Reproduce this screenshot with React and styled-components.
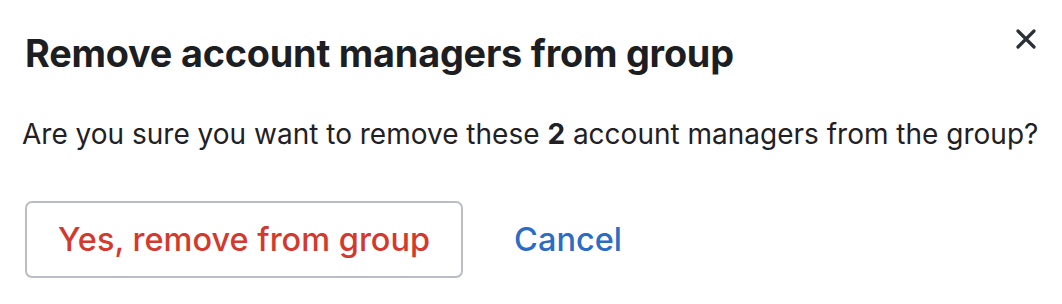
import React from "react";
import styled, { createGlobalStyle } from "styled-components";

const GlobalStyle = createGlobalStyle`
  html, body {
    margin: 0;
    padding: 0;
    background: #ffffff;
  }
  body {
    font-family: Inter, "Liberation Sans", sans-serif;
    color: #1f2124;
  }
`;

const Dialog = styled.div`
  width: 1062px;
  height: 304px;
  box-sizing: border-box;
  padding: 29px 26px 0 24px;
  display: flex;
  flex-direction: column;
`;

const Header = styled.div`
  display: flex;
  justify-content: space-between;
  align-items: flex-start;
`;

const Title = styled.h2`
  margin: 0 0 0 1px;
  font-size: 37.8px;
  line-height: 48px;
  font-weight: 700;
  letter-spacing: -0.2px;
  color: #1c1e21;
`;

const CloseButton = styled.button`
  border: none;
  background: none;
  padding: 0;
  margin: 0;
  width: 20px;
  height: 20px;
  display: flex;
  align-items: center;
  justify-content: center;
  cursor: pointer;
`;

const Message = styled.p`
  margin: 39px 0 0 -2px;
  font-size: 28px;
  line-height: 36px;
  font-weight: 400;
  color: #1f2124;
  white-space: nowrap;
  strong {
    font-weight: 700;
  }
`;

const Actions = styled.div`
  display: flex;
  align-items: center;
  gap: 51px;
  margin-top: 49px;
  margin-left: 1px;
`;

const ActionButton = styled.button`
  font-family: inherit;
  font-size: 32.5px;
  font-weight: 500;
  cursor: pointer;
  background: #fff;
  color: ${(p) => (p.$danger ? "#d4392e" : "#2b6cc4")};
  border: ${(p) => (p.$outlined ? "2px solid #babec4" : "none")};
  border-radius: 7px;
  height: ${(p) => (p.$outlined ? "77px" : "auto")};
  padding: ${(p) => (p.$outlined ? "0 31px" : "0")};
`;

const CloseIcon = () => (
  <svg width="20" height="20" viewBox="0 0 20 20">
    <path
      d="M2 2 L18 18 M18 2 L2 18"
      stroke="#2b3036"
      strokeWidth="3.2"
      strokeLinecap="round"
    />
  </svg>
);

export default function App() {
  return (
    <>
      <GlobalStyle />
      <Dialog>
        <Header>
          <Title>Remove account managers from group</Title>
          <CloseButton aria-label="Close">
            <CloseIcon />
          </CloseButton>
        </Header>
        <Message>
          Are you sure you want to remove these <strong>2</strong> account
          managers from the group?
        </Message>
        <Actions>
          <ActionButton $outlined $danger>
            Yes, remove from group
          </ActionButton>
          <ActionButton>Cancel</ActionButton>
        </Actions>
      </Dialog>
    </>
  );
}
